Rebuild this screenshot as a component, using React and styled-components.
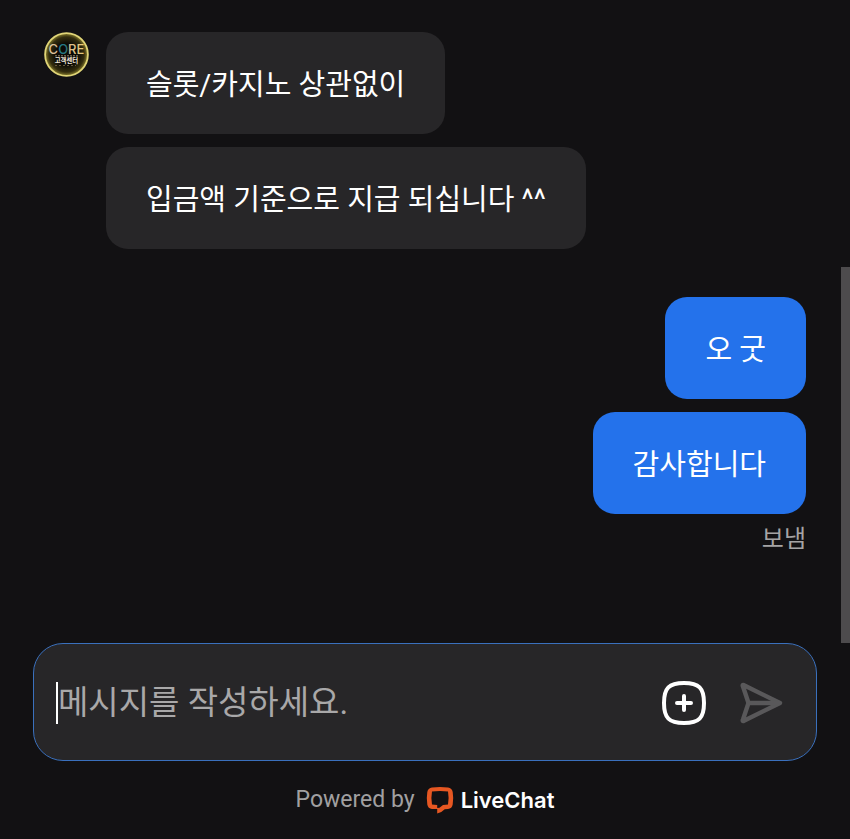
import { useState } from "react";
import styled, { createGlobalStyle } from "styled-components";

const GlobalStyle = createGlobalStyle`
  * {
    box-sizing: border-box;
  }
  body {
    margin: 0;
    background-color: #121113;
    color: #ffffff;
    font-family: Roboto, "Noto Sans CJK KR", sans-serif;
  }
`;

const Main = styled.main`
  display: flex;
  flex-direction: column;
  min-height: 100vh;
`;

const ChatBody = styled.section`
  flex: 1;
  display: flex;
`;

const Messages = styled.div`
  flex: 1;
  display: flex;
  flex-direction: column;
  gap: 48px;
  padding: 32px 35px 88px 44px;
`;

const ScrollTrack = styled.div`
  width: 9px;
  display: flex;
  flex-direction: column;
  justify-content: flex-end;
`;

const ScrollThumb = styled.div`
  height: 58.5%;
  background-color: #4d4b4d;
`;

const AgentGroup = styled.div`
  display: flex;
  align-items: flex-start;
  gap: 17px;
`;

const AvatarSvg = styled.svg`
  flex: none;
  width: 45px;
  height: 45px;
`;

const BubbleList = styled.div`
  display: flex;
  flex-direction: column;
  align-items: ${(props) => (props.$mine ? "flex-end" : "flex-start")};
  gap: 13px;
`;

const Bubble = styled.p`
  margin: 0;
  padding: 31px 40px 27px;
  border-radius: 22px;
  background-color: ${(props) => (props.$mine ? "#2472eb" : "#272628")};
  font-size: 29px;
  line-height: 44px;
`;

const Status = styled.span`
  margin-top: -4px;
  color: #a5a4a5;
  font-size: 24px;
  line-height: 32px;
`;

const Composer = styled.form`
  display: flex;
  align-items: center;
  height: 118px;
  margin: 0 33px;
  padding: 2px 33px 0 22px;
  border: 1px solid #3a70bd;
  border-radius: 30px;
  background-color: #272628;
`;

const Caret = styled.span`
  width: 2px;
  height: 42px;
  background-color: #ffffff;
`;

const MessageInput = styled.input`
  flex: 1;
  min-width: 0;
  padding: 0;
  border: none;
  outline: none;
  background: none;
  color: #ffffff;
  font-family: inherit;
  font-size: 33px;
  line-height: 48px;

  &::placeholder {
    color: #a9a8a9;
    opacity: 1;
  }
`;

const IconButton = styled.button`
  display: flex;
  margin-left: 32px;
  padding: 0;
  border: none;
  background: none;
  color: ${(props) => (props.$muted ? "#59585a" : "#ffffff")};
  cursor: pointer;
`;

const Footer = styled.footer`
  display: flex;
  justify-content: center;
  align-items: center;
  gap: 11px;
  height: 78px;
  color: #a1a0a1;
  font-size: 23px;
  line-height: 32px;
`;

const BrandLink = styled.a`
  display: flex;
  align-items: center;
  gap: 7px;
  color: #ffffff;
  font-family: Inter, sans-serif;
  font-size: 22px;
  font-weight: 600;
  text-decoration: none;
`;

const Avatar = () => (
  <AvatarSvg viewBox="0 0 45 45" role="img" aria-label="CORE 고객센터">
    <defs>
      <radialGradient id="coin">
        <stop offset="0.5" stopColor="#0b0a06" />
        <stop offset="0.82" stopColor="#332d0e" />
        <stop offset="1" stopColor="#8e8430" />
      </radialGradient>
      <linearGradient id="gold" x2="1">
        <stop offset="0" stopColor="#e5c79b" />
        <stop offset="0.26" stopColor="#d3b794" />
        <stop offset="0.27" stopColor="#1b7f90" />
        <stop offset="0.53" stopColor="#2d7378" />
        <stop offset="0.54" stopColor="#d9bd90" />
        <stop offset="1" stopColor="#e8cc78" />
      </linearGradient>
    </defs>
    <circle cx="22.5" cy="22.5" r="21.4" fill="url(#coin)" stroke="#dfd477" strokeWidth="1.8" />
    <text
      x="22.5"
      y="21.5"
      textAnchor="middle"
      fontFamily="Inter, sans-serif"
      fontSize="13"
      fontWeight="500"
      fill="url(#gold)"
    >
      CORE
    </text>
    <path d="M11 23.8H35" stroke="#92836a" strokeDasharray="2 1" />
    <text
      x="22.5"
      y="31"
      textAnchor="middle"
      fontFamily="Noto Sans CJK KR, sans-serif"
      fontSize="6.4"
      fontWeight="700"
      fill="#f1e8dc"
    >
      고객센터
    </text>
    <path d="M11 33.5H32" stroke="#66583e" strokeDasharray="2 2" />
  </AvatarSvg>
);

const PlusIcon = () => (
  <svg width="46" height="46" viewBox="0 0 46 46" fill="none" stroke="currentColor" aria-hidden="true">
    <path
      d="M23 3C8 3 3 8 3 23S8 43 23 43 43 38 43 23 38 3 23 3Z"
      strokeWidth="4"
    />
    <path d="M23 16V30M16 23H30" strokeWidth="4" strokeLinecap="round" />
  </svg>
);

const SendIcon = () => (
  <svg
    width="44"
    height="42"
    viewBox="0 0 44 42"
    fill="none"
    stroke="currentColor"
    strokeWidth="4.4"
    strokeLinecap="round"
    strokeLinejoin="round"
    aria-hidden="true"
  >
    <path d="M4 4.5Q3 2.5 5 3.2L41 21 5 38.8Q3 39.5 4 37.5L9.5 21Z" />
    <path d="M9.5 21H40" />
  </svg>
);

const BrandIcon = () => (
  <svg width="28" height="28" viewBox="0 0 28 28" fill="none" aria-hidden="true">
    <path
      d="M11.2 27.6V23H6Q2 22.6 1.3 18.5Q.3 12 1.3 6Q2 2 6 1.4Q14 .4 22 1.4Q26 2 26.7 6Q27.7 12 26.7 18.5Q26 22.6 22 23L18.7 23.2Q15.5 26.6 11.2 27.6Z"
      fill="#e65722"
    />
    <path
      d="M6 5.6Q14 4.6 22 5.6Q23.2 12 22 18.6L17 19L13.5 21.8L11.2 22V19L6 18.6Q4.8 12 6 5.6Z"
      fill="#121113"
    />
  </svg>
);

const agentMessages = ["슬롯/카지노 상관없이", "입금액 기준으로 지급 되십니다 ^^"];
const myMessages = ["오 굿", "감사합니다"];

const App = () => {
  const [text, setText] = useState("");

  return (
    <Main>
      <GlobalStyle />
      <ChatBody>
        <Messages>
          <AgentGroup>
            <Avatar />
            <BubbleList>
              {agentMessages.map((message) => (
                <Bubble key={message}>{message}</Bubble>
              ))}
            </BubbleList>
          </AgentGroup>
          <BubbleList $mine>
            {myMessages.map((message) => (
              <Bubble key={message} $mine>
                {message}
              </Bubble>
            ))}
            <Status>보냄</Status>
          </BubbleList>
        </Messages>
        <ScrollTrack>
          <ScrollThumb />
        </ScrollTrack>
      </ChatBody>
      <Composer onSubmit={(e) => e.preventDefault()}>
        {text === "" && <Caret />}
        <MessageInput
          aria-label="메시지"
          placeholder="메시지를 작성하세요."
          value={text}
          onChange={(e) => setText(e.target.value)}
        />
        <IconButton type="button" aria-label="추가">
          <PlusIcon />
        </IconButton>
        <IconButton type="submit" aria-label="보내기" $muted>
          <SendIcon />
        </IconButton>
      </Composer>
      <Footer>
        Powered by
        <BrandLink href="#livechat">
          <BrandIcon />
          LiveChat
        </BrandLink>
      </Footer>
    </Main>
  );
};

export default App;
